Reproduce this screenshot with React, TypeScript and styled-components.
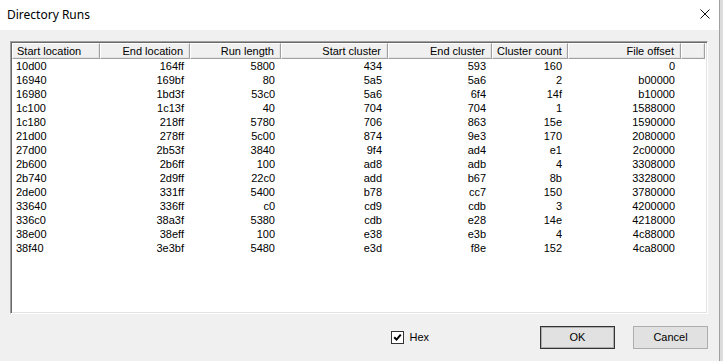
import React from 'react';
import styled, { createGlobalStyle } from 'styled-components';

const GlobalStyle = createGlobalStyle`
  html, body {
    margin: 0;
    padding: 0;
    background: #dcdcdc;
  }
  #root {
    width: 723px;
    height: 361px;
  }
`;

const COLUMNS = [
  { title: 'Start location', width: 88, align: 'left' },
  { title: 'End location', width: 90, align: 'right' },
  { title: 'Run length', width: 91, align: 'right' },
  { title: 'Start cluster', width: 107, align: 'right' },
  { title: 'End cluster', width: 104, align: 'right' },
  { title: 'Cluster count', width: 76, align: 'right' },
  { title: 'File offset', width: 113, align: 'right' },
];

const ROWS = [
  ['10d00', '164ff', '5800', '434', '593', '160', '0'],
  ['16940', '169bf', '80', '5a5', '5a6', '2', 'b00000'],
  ['16980', '1bd3f', '53c0', '5a6', '6f4', '14f', 'b10000'],
  ['1c100', '1c13f', '40', '704', '704', '1', '1588000'],
  ['1c180', '218ff', '5780', '706', '863', '15e', '1590000'],
  ['21d00', '278ff', '5c00', '874', '9e3', '170', '2080000'],
  ['27d00', '2b53f', '3840', '9f4', 'ad4', 'e1', '2c00000'],
  ['2b600', '2b6ff', '100', 'ad8', 'adb', '4', '3308000'],
  ['2b740', '2d9ff', '22c0', 'add', 'b67', '8b', '3328000'],
  ['2de00', '331ff', '5400', 'b78', 'cc7', '150', '3780000'],
  ['33640', '336ff', 'c0', 'cd9', 'cdb', '3', '4200000'],
  ['336c0', '38a3f', '5380', 'cdb', 'e28', '14e', '4218000'],
  ['38e00', '38eff', '100', 'e38', 'e3b', '4', '4c88000'],
  ['38f40', '3e3bf', '5480', 'e3d', 'f8e', '152', '4ca8000'],
];

const gridTemplate = COLUMNS.map((c) => `${c.width}px`).join(' ') + ' 1fr';

const Window = styled.div`
  width: 719px;
  height: 361px;
  background: #f0f0f0;
  border-right: 1px solid #a0a0a0;
  display: flex;
  flex-direction: column;
  font-family: "Liberation Sans", Arial, sans-serif;
  font-size: 11px;
  color: #000;
`;

const TitleBar = styled.div`
  height: 30px;
  background: #fff;
  display: flex;
  align-items: center;
  justify-content: space-between;
  padding: 0 9px 2px 7px;
  box-sizing: border-box;
`;

const Title = styled.span`
  font-family: "Noto Sans", "Liberation Sans", sans-serif;
  font-size: 12px;
  color: #000;
`;

const CloseButton = styled.div`
  width: 10px;
  height: 10px;
  display: flex;
`;

const Body = styled.div`
  flex: 1;
  display: flex;
  flex-direction: column;
  padding: 11px 11px 0 10px;
`;

const ListBox = styled.div`
  height: 273px;
  box-sizing: border-box;
  background: #fff;
  border-top: 1px solid #a0a0a0;
  border-left: 1px solid #a0a0a0;
  border-right: 1px solid #fff;
  border-bottom: 1px solid #fff;
  box-shadow: inset 1px 1px 0 #696969, inset -1px -1px 0 #e3e3e3;
  padding: 1px 2px 2px 1px;
  display: flex;
  flex-direction: column;
`;

const HeaderRow = styled.div`
  display: grid;
  grid-template-columns: ${gridTemplate};
  height: 16px;
`;

const HeaderCell = styled.div<{ $align: string }>`
  box-sizing: border-box;
  background: #f0f0f0;
  border-top: 1px solid #fff;
  border-left: 1px solid #fff;
  border-right: 1px solid #a0a0a0;
  border-bottom: 1px solid #a0a0a0;
  box-shadow: inset -1px -1px 0 #e3e3e3;
  padding: 0 6px 0 4px;
  line-height: 14px;
  text-align: ${({ $align }) => $align};
  white-space: nowrap;
  overflow: hidden;
`;

const DataRow = styled.div`
  display: grid;
  grid-template-columns: ${gridTemplate};
  height: 14px;
  line-height: 14px;
`;

const DataCell = styled.div<{ $align: string }>`
  padding: 0 6px 0 4px;
  text-align: ${({ $align }) => $align};
  white-space: nowrap;
`;

const Footer = styled.div`
  height: 47px;
  display: flex;
  align-items: center;
  justify-content: flex-end;
  padding-bottom: 1px;
  box-sizing: border-box;
`;

const CheckLabel = styled.label`
  display: flex;
  align-items: center;
  gap: 5px;
  margin-right: 111px;
`;

const CheckBox = styled.span`
  width: 13px;
  height: 13px;
  box-sizing: border-box;
  background: #fff;
  border: 1px solid #333;
  display: flex;
  align-items: center;
  justify-content: center;
`;

const Button = styled.button<{ $default?: boolean }>`
  width: 75px;
  height: 23px;
  margin-left: ${({ $default }) => ($default ? '0' : '18px')};
  background: #e1e1e1;
  border: 1px solid ${({ $default }) => ($default ? '#333' : '#adadad')};
  box-shadow: ${({ $default }) => ($default ? 'inset 0 0 0 1px #adadad' : 'none')};
  font-family: "Liberation Sans", Arial, sans-serif;
  font-size: 11px;
  color: #000;
  padding: 0;
`;

function App() {
  return (
    <>
      <GlobalStyle />
      <Window>
        <TitleBar>
          <Title>Directory Runs</Title>
          <CloseButton>
            <svg width="10" height="10" viewBox="0 0 10 10">
              <path d="M0.5 0.5 L9.5 9.5 M9.5 0.5 L0.5 9.5" stroke="#111" strokeWidth="1" fill="none" />
            </svg>
          </CloseButton>
        </TitleBar>
        <Body>
          <ListBox>
            <HeaderRow>
              {COLUMNS.map((c) => (
                <HeaderCell key={c.title} $align={c.align}>
                  {c.title}
                </HeaderCell>
              ))}
              <HeaderCell $align="left" />
            </HeaderRow>
            {ROWS.map((row) => (
              <DataRow key={row[0]}>
                {row.map((v, i) => (
                  <DataCell key={i} $align={COLUMNS[i].align}>
                    {v}
                  </DataCell>
                ))}
              </DataRow>
            ))}
          </ListBox>
          <Footer>
            <CheckLabel>
              <CheckBox>
                <svg width="9" height="9" viewBox="0 0 9 9">
                  <path d="M1.2 4.2 L3.5 6.6 L7.8 1.6" stroke="#000" strokeWidth="2" fill="none" />
                </svg>
              </CheckBox>
              Hex
            </CheckLabel>
            <Button $default>OK</Button>
            <Button>Cancel</Button>
          </Footer>
        </Body>
      </Window>
    </>
  );
}

export default App;
